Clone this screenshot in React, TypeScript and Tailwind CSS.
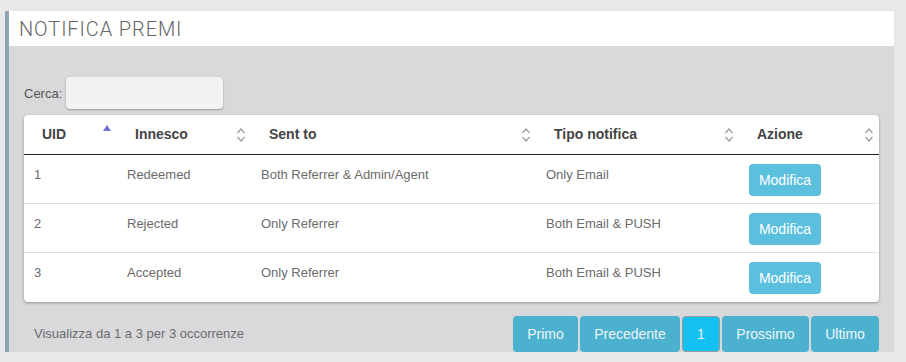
import React from "react";

const cols = [
  { id: 0, name: "UID", w: "w-[93px]", sort: "asc" },
  { id: 1, name: "Innesco", w: "w-[134px]", sort: "both" },
  { id: 2, name: "Sent to", w: "w-[285px]", sort: "both" },
  { id: 3, name: "Tipo notifica", w: "w-[203px]", sort: "both" },
  { id: 4, name: "Azione", w: "w-[140px]", sort: "both" },
];

const rows = [
  { uid: 1, trigger: "Redeemed", sent: "Both Referrer & Admin/Agent", type: "Only Email" },
  { uid: 2, trigger: "Rejected", sent: "Only Referrer", type: "Both Email & PUSH" },
  { uid: 3, trigger: "Accepted", sent: "Only Referrer", type: "Both Email & PUSH" },
];

const pages = [
  { id: 0, label: "Primo", w: "w-[65px]" },
  { id: 1, label: "Precedente", w: "w-[100px]" },
  { id: 2, label: "1", w: "w-[38px]", active: true },
  { id: 3, label: "Prossimo", w: "w-[87px]" },
  { id: 4, label: "Ultimo", w: "w-[68px]" },
];

const SortIcon = ({ kind }: { kind: string }) =>
  kind === "asc" ? (
    <svg width="10" height="16" viewBox="0 0 10 16" className="mb-[8px]">
      <polygon points="5,2 9,8 1,8" fill="#7070d8" />
    </svg>
  ) : (
    <svg width="10" height="16" viewBox="0 0 10 16">
      <polyline points="1.5,6 5,2 8.5,6" fill="none" stroke="#9a9a9a" strokeWidth="1.2" />
      <polyline points="1.5,10 5,14 8.5,10" fill="none" stroke="#9a9a9a" strokeWidth="1.2" />
    </svg>
  );

const App = () => {
  return (
    <div
      className="w-[906px] h-[362px] bg-[#e8e8ea] pt-[11px] pl-[5px]"
      style={{ fontFamily: '"Liberation Sans", Arial, sans-serif' }}
    >
      <div className="w-[889px] h-[341px] border-l-4 border-[#8fa4b0] flex flex-col">
        {/* header */}
        <div className="h-[35px] bg-white pl-[10px] flex items-center">
          <h2
            className="text-[20px] font-light text-[#666] tracking-[0.9px]"
            style={{ fontFamily: 'Roboto, "Liberation Sans", sans-serif' }}
          >
            NOTIFICA PREMI
          </h2>
        </div>

        <div className="flex-1 bg-[#d9d9db] pl-[15px] pt-[31px]">
          {/* search */}
          <div className="flex items-center">
            <label className="text-[13px] text-[#555] mr-[4px] mt-[1px]">Cerca:</label>
            <input className="w-[157px] h-[32px] bg-[#f2f2f2] rounded-[4px] shadow-[0_1px_2px_rgba(0,0,0,0.3)] outline-none" />
          </div>

          {/* table */}
          <div className="mt-[6px] w-[855px] bg-white rounded-[4px] shadow-[0_1px_3px_rgba(0,0,0,0.35)] overflow-hidden">
            <div className="flex h-[40px] border-b border-[#222]">
              {cols.map((c) => (
                <div
                  key={c.id}
                  className={`${c.w} flex items-center justify-between pl-[18px] pr-[5px] text-[14px] font-bold text-[#444]`}
                >
                  <span>{c.name}</span>
                  <SortIcon kind={c.sort} />
                </div>
              ))}
            </div>
            {rows.map((r, i) => (
              <div
                key={r.uid}
                className={`flex h-[49px] text-[13px] text-[#6b6b6b] ${i < rows.length - 1 ? "border-b border-[#ddd]" : ""}`}
              >
                <div className="w-[93px] pl-[10px] pt-[10px]">{r.uid}</div>
                <div className="w-[134px] pl-[10px] pt-[10px]">{r.trigger}</div>
                <div className="w-[285px] pl-[10px] pt-[10px]">{r.sent}</div>
                <div className="w-[203px] pl-[10px] pt-[10px]">{r.type}</div>
                <div className="w-[140px] pl-[10px] pt-[9px]">
                  <button className="w-[72px] h-[32px] bg-[#5bc0de] rounded-[4px] text-white text-[14px]">
                    Modifica
                  </button>
                </div>
              </div>
            ))}
          </div>

          {/* footer */}
          <div className="mt-[14px] w-[855px] flex justify-between items-center">
            <div className="pl-[10px] text-[13px] text-[#6b6b6b]">Visualizza da 1 a 3 per 3 occorrenze</div>
            <div className="flex gap-[2px]">
              {pages.map((p) => (
                <button
                  key={p.id}
                  className={`${p.w} h-[36px] rounded-[4px] text-[14px] text-[#eef6fa] ${
                    p.active ? "bg-[#14c0f0] border border-[#999]" : "bg-[#4bb1cf]"
                  }`}
                >
                  {p.label}
                </button>
              ))}
            </div>
          </div>
        </div>
      </div>
    </div>
  );
};

export default App;
